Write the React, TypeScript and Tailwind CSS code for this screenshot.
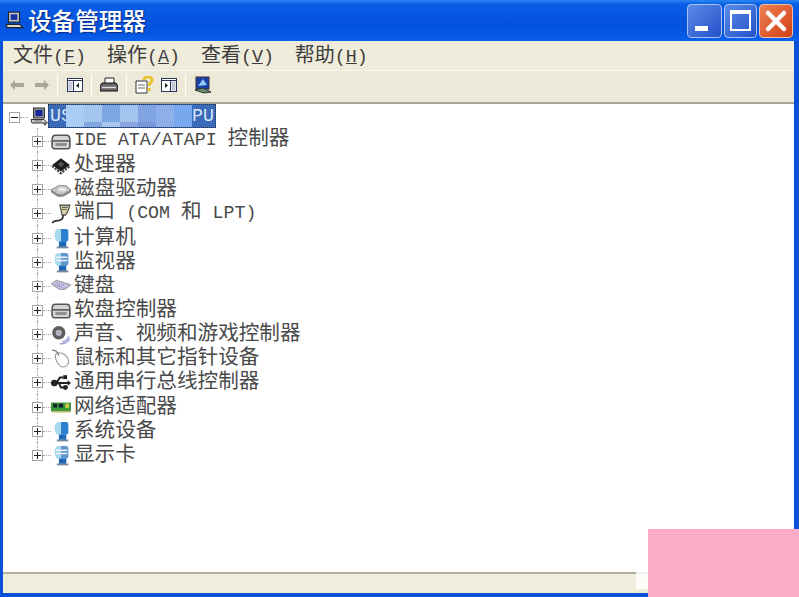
import React from 'react'

const cjk = "font-['Noto_Sans_CJK_SC','Liberation_Sans',sans-serif]"
const latin = "font-['Liberation_Mono','Noto_Sans_CJK_SC',monospace] text-[18.3px]"

const MonitorIcon = () => (
	<svg width="18" height="19" viewBox="0 0 18 18">
		<rect x="3.500" y=".5" width="11" height="10" fill="#8d8d8d" stroke="#333" />
		<rect x="5.500" y="2.500" width="7" height="6" fill="#14249a" />
		<path d="M1 12h13l3.500 3.500H2z" fill="#d4d4d4" stroke="#333" />
		<path d="M4 13.500h8" stroke="#666" />
		<circle cx="15" cy="16.500" r="1.500" fill="#666" />
	</svg>
)

const DriveIcon = () => (
	<svg width="20" height="20" viewBox="0 0 18 18">
		<path d="M4 3h10c2 0 3 2 3 4v6c0 1-1 2-2 2H3c-1 0-2-1-2-2V7c0-2 1-4 3-4z" fill="#d4d4d4" stroke="#555" strokeWidth="1.400" />
		<path d="M1 8h16" stroke="#555" strokeWidth="1.400" />
		<rect x="4" y="10" width="10" height="2.500" fill="#8a8a8a" />
	</svg>
)

const ChipIcon = () => (
	<svg width="20" height="20" viewBox="0 0 18 18">
		<path d="M9 2l8 6-8 6-8-6z" fill="#1e1e1e" />
		<path d="M1 9l8 6.500L17 9" stroke="#444" strokeWidth="2" fill="none" strokeDasharray="2 1" />
		<path d="M9 5l3 2.500L9 10 6 7.500z" fill="#555" />
	</svg>
)

const DiskIcon = () => (
	<svg width="20" height="20" viewBox="0 0 18 18">
		<path d="M0 9l7-4h6l5 4-7 4H6z" fill="#c6c6c6" stroke="#999" />
		<path d="M0 9l6 4h5l7-4v2l-7 4H6l-6-4z" fill="#858585" />
		<ellipse cx="10" cy="8.500" rx="3.500" ry="1.700" fill="#ececec" />
	</svg>
)

const PortIcon = () => (
	<svg width="20" height="20" viewBox="0 0 18 18">
		<path d="M8 1h9l-2 6-2 3h-3z" fill="#d8d4a4" stroke="#444" />
		<path d="M10 3h5M10 5h4" stroke="#666" />
		<path d="M11 10c0 4-2 5-5 5s-4 1-5 2" stroke="#333" strokeWidth="1.500" fill="none" />
	</svg>
)

const BlueScreenIcon = ({ stand = false }: { stand?: boolean }) => (
	<svg width="20" height="21" viewBox="0 0 18 20">
		<path d="M7 1h7c1 0 2 1 2 2v8c0 1-1 2-2 2H7z" fill={stand ? '#5f96cc' : '#2f7fd0'} />
		<path d="M7 1C4 1 3 3 3 7s1 6 4 6h2V1z" fill="#a6d8ee" />
		{stand && <path d="M4 5h11M4 8h11" stroke="#eef6fb" strokeWidth="1.400" />}
		<path d="M7 13h7v5H7z" fill="#1c68b8" />
		<path d="M5 18.500h11" stroke="#78889a" strokeWidth="1.800" />
	</svg>
)

const KeyboardIcon = () => (
	<svg width="20" height="20" viewBox="0 0 18 18">
		<path d="M0 7l5-3 13 4-6 4H8z" fill="#c8c4e6" stroke="#a0a0ae" />
		<path d="M5 6.500l7 2M3.500 8l7 2.200" stroke="#8280b0" strokeDasharray="1 1" />
	</svg>
)

const SoundIcon = () => (
	<svg width="20" height="20" viewBox="0 0 18 18">
		<circle cx="7" cy="7" r="6" fill="#5e5e5e" />
		<circle cx="7" cy="7" r="2.800" fill="#b4b4c4" />
		<path d="M10 15c3 0 5-2 6-5M8 17c5 0 8-3 9-5" stroke="#96a0d8" strokeWidth="1.200" fill="none" />
	</svg>
)

const MouseIcon = () => (
	<svg width="20" height="20" viewBox="0 0 18 18">
		<path d="M4 5c2-2 5-2 8 0s5 6 3 9-6 3-8 0-4-6-3-9z" fill="#fff" stroke="#999" />
		<path d="M1 1c2 0 5 1 6 5" stroke="#777" fill="none" />
	</svg>
)

const UsbIcon = () => (
	<svg width="20" height="20" viewBox="0 0 18 18">
		<path d="M1 9h15" stroke="#222" strokeWidth="1.800" />
		<circle cx="3" cy="9" r="3" fill="#222" />
		<path d="M5 9l3-5h3M7 9l2 4h3" stroke="#222" strokeWidth="1.700" fill="none" />
		<rect x="11" y="2" width="3.500" height="3.500" fill="#222" />
		<circle cx="13" cy="13" r="2.200" fill="#222" />
		<path d="M15 6.500l3 2.500-3 2.500z" fill="#222" />
	</svg>
)

const NetworkIcon = () => (
	<svg width="20" height="18" viewBox="0 0 18 16">
		<rect x="0" y="4" width="18" height="8" fill="#3c9a38" />
		<rect x="2" y="5" width="3.500" height="3.500" fill="#123" />
		<rect x="7" y="5" width="4" height="3.500" fill="#123" />
		<rect x="13" y="5" width="3" height="4" fill="#d8c84a" />
		<path d="M1 12.500h16" stroke="#c8b45a" />
	</svg>
)

const Expander = ({ minus = false }: { minus?: boolean }) => (
	<span className="relative flex h-[11px] w-[11px] items-center justify-center border border-[#a8a8a0] bg-white">
		<span className="absolute h-px w-[7px] bg-[#222]" />
		{!minus && <span className="absolute h-[7px] w-px bg-[#222]" />}
	</span>
)

const Label = ({ parts }: { parts: string[] }) => (
	<span className={`${cjk} mb-[3px] whitespace-pre text-[20.6px] leading-[21px] text-[#4a4a4a]`}>
		{parts.map((part, i) =>
			/^[\x00-\x7f]+$/.test(part) ? (
				<span key={i} className={latin}>
					{part}
				</span>
			) : (
				<span key={i}>{part}</span>
			),
		)}
	</span>
)

const rows: { label: string[]; icon: React.ReactNode }[] = [
	{ label: ['IDE ATA/ATAPI ', '控制器'], icon: <DriveIcon /> },
	{ label: ['处理器'], icon: <ChipIcon /> },
	{ label: ['磁盘驱动器'], icon: <DiskIcon /> },
	{ label: ['端口', ' (COM ', '和', ' LPT)'], icon: <PortIcon /> },
	{ label: ['计算机'], icon: <BlueScreenIcon /> },
	{ label: ['监视器'], icon: <BlueScreenIcon stand /> },
	{ label: ['键盘'], icon: <KeyboardIcon /> },
	{ label: ['软盘控制器'], icon: <DriveIcon /> },
	{ label: ['声音、视频和游戏控制器'], icon: <SoundIcon /> },
	{ label: ['鼠标和其它指针设备'], icon: <MouseIcon /> },
	{ label: ['通用串行总线控制器'], icon: <UsbIcon /> },
	{ label: ['网络适配器'], icon: <NetworkIcon /> },
	{ label: ['系统设备'], icon: <BlueScreenIcon /> },
	{ label: ['显示卡'], icon: <BlueScreenIcon stand /> },
]

const mosaic = [
	['bg-[#a9cdf5]', 'bg-[#a9cdf5]'],
	['bg-[#a3c6ee]', 'bg-[#7fa6df]'],
	['bg-[#7da6e4]', 'bg-[#a8c6ee]'],
	['bg-[#a3c4ef]', 'bg-[#8aa6e2]'],
	['bg-[#80a5e2]', 'bg-[#7896d8]'],
	['bg-[#8db0ea]', 'bg-[#8db0ea]'],
	['bg-[#7aa8ee]', 'bg-[#7aa8ee]'],
]

const MenuItem = ({ name, hot }: { name: string; hot: string }) => (
	<span className={`${cjk} whitespace-pre text-[20px] text-[#3c3c3c]`}>
		{name}
		<span className={latin}>
			(<span className="underline">{hot}</span>)
		</span>
	</span>
)

const Sep = () => <span className="h-[22px] w-px border-r border-r-white bg-[#c4c0ac]" />

const App = () => {
	return (
		<div className="relative flex h-[597px] w-[799px] flex-col overflow-hidden bg-[#0a50d8]">
			{/* title bar */}
			<div className="flex h-[41px] shrink-0 items-center bg-[linear-gradient(180deg,#2c86f4_0%,#0a5ee8_10%,#0452de_55%,#0558e4_85%,#0a62ee_100%)] pl-[4px] pr-[6px]">
				<svg width="20" height="20" viewBox="0 0 18 18" className="mt-[1px]">
					<rect x="4" y="1" width="10" height="9" fill="#b8c0cc" stroke="#222" />
					<rect x="6" y="3" width="6" height="5" fill="#1a2fa0" />
					<path d="M2 12h12l3 3H3z" fill="#d8d8d8" stroke="#222" />
				</svg>
				<span className={`${cjk} ml-[4px] text-[23.6px] font-medium text-white [text-shadow:1px_1px_1px_#0a2a80]`}>
					设备管理器
				</span>
				<div className="ml-auto flex gap-[2px]">
					<div className="flex h-[34px] w-[35px] items-end rounded-[4px] border border-[#a8c4f4] bg-[linear-gradient(135deg,#5c8ce8,#2350c8)] pb-[6px] pl-[7px]">
						<span className="h-[5px] w-[13px] bg-white" />
					</div>
					<div className="flex h-[34px] w-[33px] items-center justify-center rounded-[4px] border border-[#a8c4f4] bg-[linear-gradient(135deg,#5c8ce8,#2350c8)]">
						<span className="h-[21px] w-[21px] border-2 border-t-[4px] border-white" />
					</div>
					<div className="flex h-[34px] w-[34px] items-center justify-center rounded-[4px] border border-[#f0c0a8] bg-[linear-gradient(135deg,#ee8050,#d04018)]">
						<svg width="24" height="24" viewBox="0 0 24 24">
							<path d="M4 4l16 16M20 4L4 20" stroke="#fff" strokeWidth="4.500" strokeLinecap="round" />
						</svg>
					</div>
				</div>
			</div>

			<div className="flex min-h-0 flex-1 flex-col border-b-[4px] border-l-[3px] border-r-[5px] border-[#0a50d8]">
				{/* menu */}
				<div className="flex h-[29px] shrink-0 items-center gap-[21px] bg-[#efecdc] pl-[10px]">
					<MenuItem name="文件" hot="F" />
					<MenuItem name="操作" hot="A" />
					<MenuItem name="查看" hot="V" />
					<MenuItem name="帮助" hot="H" />
				</div>

				{/* toolbar */}
				<div className="flex h-[34px] shrink-0 items-center border-t border-t-[#f8f6ec] border-b-2 border-b-[#a8a498] bg-[#ece9d8] pb-[3px] pl-[6px]">
					<svg width="16" height="12" viewBox="0 0 16 12" className="mr-[9px]">
						<path d="M6 1L1 6l5 5V8h9V4H6z" fill="#a8a89a" />
					</svg>
					<svg width="16" height="12" viewBox="0 0 16 12" className="mr-[7px]">
						<path d="M10 1l5 5-5 5V8H1V4h9z" fill="#a8a89a" />
					</svg>
					<Sep />
					<svg width="16" height="14" viewBox="0 0 16 14" className="ml-[9px] mr-[8px]">
						<rect x=".5" y=".5" width="15" height="13" fill="#fff" stroke="#28335a" />
						<path d="M.5 2.500h15M6.500 2v11" stroke="#28335a" />
						<path d="M12 5L9 7.500l3 2.500z" fill="#222" />
						<rect x="1.500" y="3.500" width="4" height="9" fill="#c8c8d8" />
					</svg>
					<Sep />
					<svg width="18" height="16" viewBox="0 0 18 16" className="ml-[8px] mr-[8px]">
						<path d="M5 1h9v6H5z" fill="#fff" stroke="#222" />
						<path d="M2 6h14l2 3v5H0V9z" fill="#666" stroke="#111" />
						<path d="M2 10.500h14" stroke="#ddd" strokeWidth="1.500" />
					</svg>
					<Sep />
					<svg width="20" height="18" viewBox="0 0 20 18" className="ml-[8px] mr-[6px]">
						<path d="M1 5h11v12H1z" fill="#fff" stroke="#333" />
						<path d="M3 9h7M3 12h7" stroke="#666" />
						<path d="M9 4c0-4 8-4 8 0 0 3-3 3-3 6" stroke="#e8c020" strokeWidth="2.500" fill="none" />
						<rect x="12.500" y="12" width="3" height="3" fill="#e8c020" />
					</svg>
					<svg width="16" height="14" viewBox="0 0 16 14" className="mr-[8px]">
						<rect x=".5" y=".5" width="15" height="13" fill="#fff" stroke="#28335a" />
						<path d="M.5 2.500h15M9.500 2v11" stroke="#28335a" />
						<path d="M4 5l3 2.500L4 10z" fill="#222" />
						<rect x="10.500" y="3.500" width="4" height="9" fill="#c8c8d8" />
					</svg>
					<Sep />
					<svg width="18" height="18" viewBox="0 0 18 18" className="ml-[8px]">
						<rect x="2" y="1" width="13" height="12" fill="#1c3ea8" stroke="#333" />
						<path d="M4 10l5-7 4 6z" fill="#8ec8f0" />
						<path d="M1 14l8-2 8 4-7 1z" fill="#6a8a70" stroke="#333" />
					</svg>
				</div>

				{/* tree */}
				<div className="min-h-0 flex-1 bg-white">
					<div className="flex h-[24px] items-center">
						<span className="ml-[6px] mt-[2px] w-[11px]">
							<Expander minus />
						</span>
						<span className="mt-[2px] w-[8px] border-t border-dotted border-[#a0a0a0]" />
						<span className="ml-[2px] mt-[1px]">
							<MonitorIcon />
						</span>
						<div className="relative flex h-[24px] w-[168px] justify-between overflow-hidden border border-dotted border-[#20304a] bg-[#3a6ab8] px-px">
							<span className={`${latin} leading-[22px] text-[#d8e8f8]`}>US</span>
							<span className={`${latin} leading-[22px] text-[#d8e8f8]`}>PU</span>
							<div className="absolute bottom-0 left-[17px] top-0 flex">
								{mosaic.map(([top, bottom], i) => (
									<div key={i} className="flex w-[18px] flex-col">
										<span className={`h-[17px] ${top}`} />
										<span className={`flex-1 ${bottom}`} />
									</div>
								))}
							</div>
						</div>
					</div>

					{rows.map((row, i) => (
						<div key={i} className="flex h-[24.15px] items-center">
							<div className="relative ml-[29px] flex h-full w-[11px] items-center pt-[3px]">
								<span
									className={`absolute left-[5px] top-0 border-l border-dotted border-[#a0a0a0] ${
										i === rows.length - 1 ? 'h-1/2' : 'h-full'
									}`}
								/>
								<span className="relative">
									<Expander />
								</span>
							</div>
							<span className="mt-[3px] w-[8px] border-t border-dotted border-[#a0a0a0]" />
							<span className="flex w-[23px] items-center justify-start pt-[3px]">{row.icon}</span>
							<Label parts={row.label} />
						</div>
					))}
				</div>

				{/* status bar */}
				<div className="h-[21px] shrink-0 border-t-2 border-t-[#b4b0a0] bg-[#f0eddd]" />
			</div>

			{/* pink patch over the corner */}
			<div className="absolute bottom-[8px] left-[636px] h-[22px] w-[12px] bg-white opacity-80" />
			<div className="absolute bottom-0 right-0 h-[68px] w-[151px] bg-[#fdaec6]" />
		</div>
	)
}

export default App
